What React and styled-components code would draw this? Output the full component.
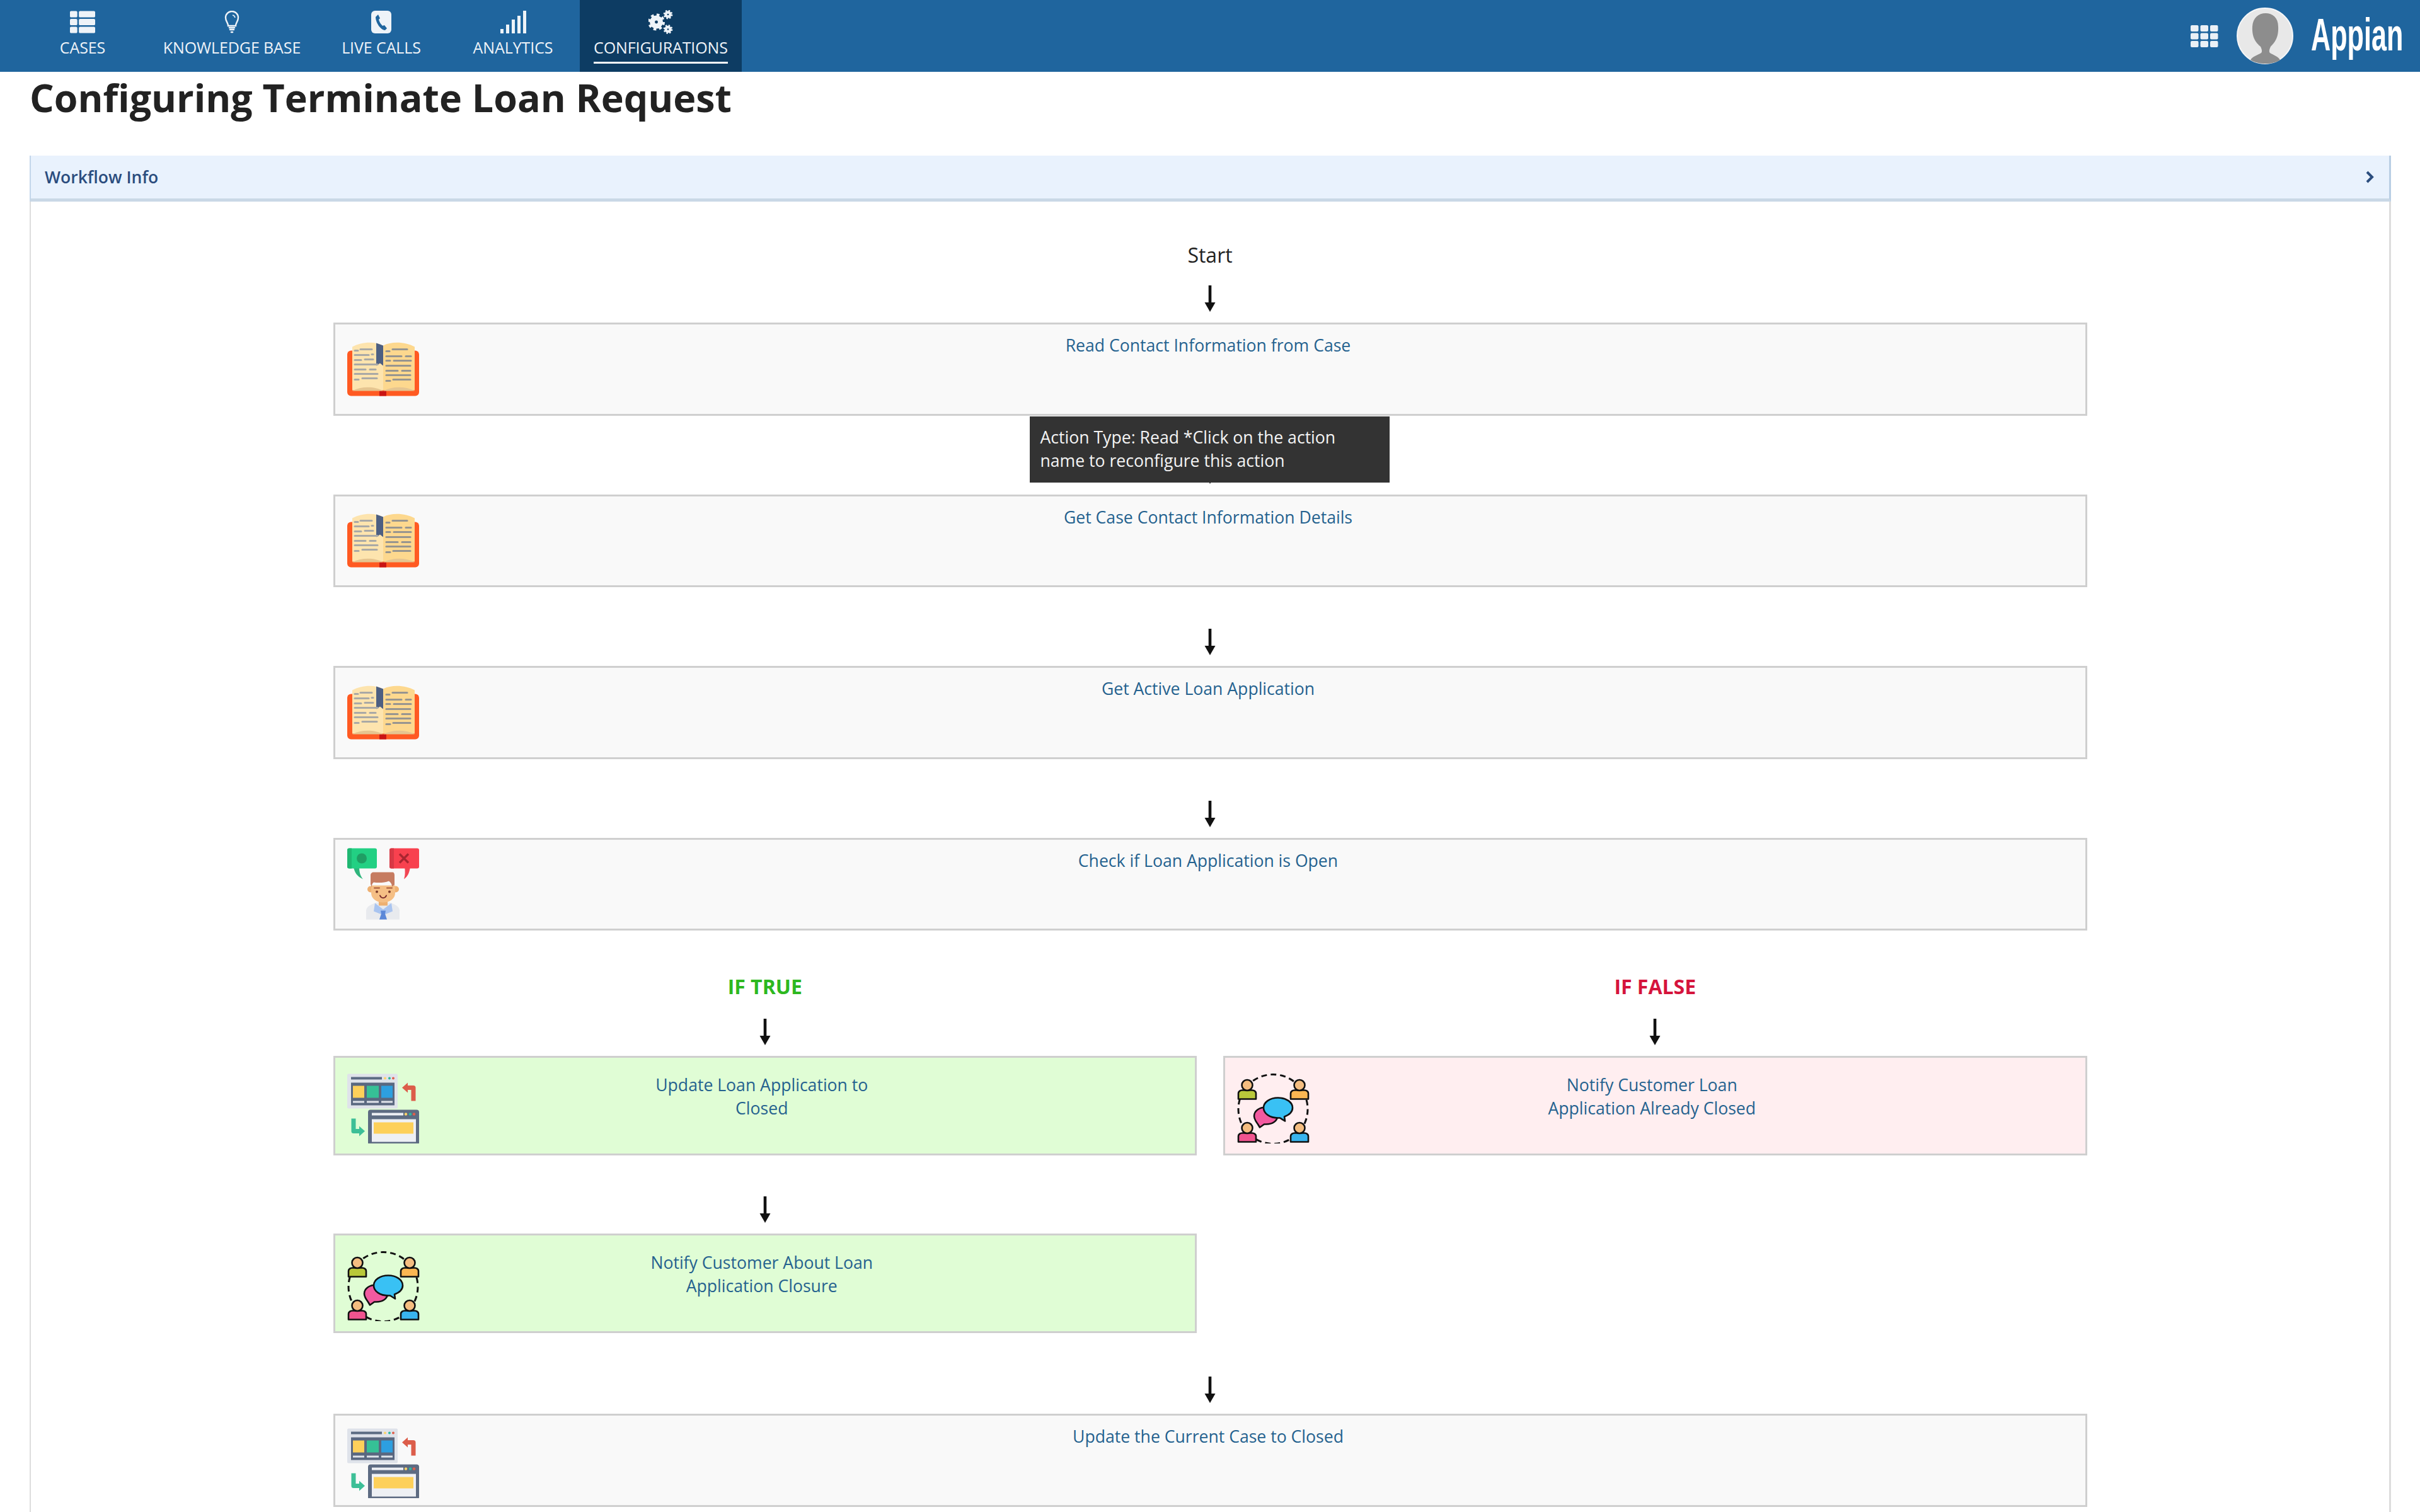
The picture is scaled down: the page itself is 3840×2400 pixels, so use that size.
import styled, { createGlobalStyle } from 'styled-components';
import { FaThList } from 'react-icons/fa';

const GlobalStyle = createGlobalStyle`
  html, body {
    margin: 0;
    padding: 0;
    background: #fff;
    font-family: "Open Sans", "Noto Sans", sans-serif;
  }
`;

const Page = styled.div`
  width: 3840px;
  height: 2400px;
  display: flex;
  flex-direction: column;
  overflow: hidden;
`;

const Header = styled.header`
  height: 114px;
  flex: none;
  background: #1f659e;
  display: flex;
  align-items: stretch;
  padding: 0 25px 0 28px;
`;

const Tabs = styled.nav`
  display: flex;
`;

const Tab = styled.a`
  width: ${props => props.$width}px;
  padding-top: 16px;
  box-sizing: border-box;
  display: flex;
  flex-direction: column;
  align-items: center;
  color: #eef3f8;
  background: ${props => (props.$active ? '#0d3c63' : 'transparent')};
`;

const TabIcon = styled.div`
  height: 38px;
  display: flex;
  align-items: center;
  justify-content: center;
  svg { display: block; }
`;

const TabLabel = styled.span`
  margin-top: 5px;
  font-size: 25px;
  line-height: 33px;
  padding-bottom: 6px;
  white-space: nowrap;
  letter-spacing: -0.1px;
  border-bottom: 3px solid ${props => (props.$active ? '#fff' : 'transparent')};
`;

const HeaderRight = styled.div`
  margin-left: auto;
  display: flex;
  align-items: center;
`;

const Avatar = styled.div`
  width: 90px;
  height: 90px;
  margin-left: 29px;
  svg { display: block; }
`;

const Logo = styled.span`
  display: inline-block;
  width: 148px;
  margin: -4px 0 0 28px;
  color: #fff;
  font-family: "Liberation Sans", sans-serif;
  font-size: 72px;
  font-weight: 700;
  line-height: 72px;
  white-space: nowrap;
  transform: scaleX(0.6);
  transform-origin: left center;
`;

const Title = styled.h1`
  margin: 0 0 51px;
  padding-left: 47px;
  font-size: 60.9px;
  line-height: 82px;
  font-weight: 700;
  color: #222;
`;

const Panel = styled.section`
  flex: 1;
  margin: 0 46px 0 47px;
  display: flex;
  flex-direction: column;
`;

const PanelHeader = styled.div`
  height: 68px;
  flex: none;
  display: flex;
  align-items: center;
  justify-content: space-between;
  padding: 0 24px 0 22px;
  background: #e9f2fd;
  border-left: 2px solid #c3d6ea;
  border-right: 3px solid #b9cee4;
  border-bottom: 5px solid #c9d8e6;
`;

const PanelTitle = styled.span`
  font-size: 26.5px;
  font-weight: 600;
  color: #2b4d7e;
`;

const PanelBody = styled.div`
  flex: 1;
  border-left: 2px solid #ddd;
  border-right: 3px solid #ddd;
`;

const Flow = styled.div`
  width: 2783px;
  margin: 0 auto;
  padding-top: 63px;
`;

const StartLabel = styled.div`
  text-align: center;
  font-size: 32px;
  line-height: 44px;
  color: #222;
`;

const Connector = styled.div`
  position: relative;
  padding: ${props => props.$top ?? 66}px 0 17px;
`;

const ArrowSvg = styled.svg`
  display: block;
  width: 20px;
  height: 42px;
  margin: 0 auto;
`;

const Tooltip = styled.div`
  position: absolute;
  top: 1px;
  left: 1105px;
  z-index: 2;
  width: 571px;
  height: 105px;
  box-sizing: border-box;
  padding: 15px 17px;
  background: #333;
  color: #f4f4f4;
  font-size: 26.6px;
  line-height: 37.5px;
`;

const tones = {
  neutral: '#f9f9f9',
  green: '#e0fdd5',
  red: '#ffeef0',
};

const Box = styled.div`
  display: flex;
  align-items: flex-start;
  box-sizing: border-box;
  height: ${props => (props.$half ? 158 : 147.5)}px;
  padding: ${props => (props.$half ? 25 : 15)}px ${props => (props.$half ? 144 : 140)}px 0 19px;
  background: ${props => tones[props.$tone || 'neutral']};
  border: 3px solid #cfcfcf;
`;

const BoxIcon = styled.svg`
  flex: none;
  width: 115px;
  height: 120px;
  align-self: center;
  margin-top: ${props => (props.$half ? -25 : -15)}px;
`;

const BoxText = styled.a`
  flex: 1;
  display: flex;
  justify-content: center;
  color: #25628f;
  font-size: 26.6px;
  line-height: 37px;
  text-align: center;
`;

const BoxLabel = styled.span`
  max-width: ${props => (props.$half ? '385px' : 'none')};
`;

const Branches = styled.div`
  display: grid;
  grid-template-columns: 1fr 1fr;
  column-gap: 42px;
  margin-top: 67px;
`;

const Branch = styled.div`
  display: flex;
  flex-direction: column;
`;

const BranchLabel = styled.div`
  text-align: center;
  font-size: 32px;
  line-height: 44px;
  font-weight: 700;
  color: ${props => props.$color};
`;

function Arrow() {
  return (
    <ArrowSvg viewBox="0 0 20 42">
      <path d="M7.7 0h4.6v30H7.7z" fill="#111" />
      <path d="M1.5 27h17L10 42z" fill="#111" />
    </ArrowSvg>
  );
}

function BulbIcon() {
  return (
    <svg width="26" height="36" viewBox="0 0 26 36" fill="none" stroke="#eef3f8" strokeWidth="2.4">
      <path d="M7 24c0-5-4-7-4-13a10 10 0 0 1 20 0c0 6-4 8-4 13z" />
      <path d="M9 27h8M10 30h6" strokeWidth="2.6" strokeLinecap="round" />
      <path d="M12 34h2" strokeWidth="2.6" strokeLinecap="round" />
      <path d="M14 7a5 5 0 0 1 4 4" strokeWidth="1.6" />
    </svg>
  );
}

function PhoneIcon() {
  return (
    <svg width="32" height="36" viewBox="0 0 32 36">
      <rect width="32" height="36" rx="6" fill="#eef3f8" />
      <path
        d="M11 6l3 6-2 2c1 4 3 7 6 10l3-1 4 5-3 3c-8-1-15-13-15-21z"
        fill="#1f659e"
      />
    </svg>
  );
}

function BarsIcon() {
  return (
    <svg width="41" height="36" viewBox="0 0 41 36" fill="#eef3f8">
      <rect x="0" y="29" width="5" height="7" />
      <rect x="9" y="22" width="5" height="14" />
      <rect x="18" y="14" width="5" height="22" />
      <rect x="27" y="8" width="5" height="28" />
      <rect x="36" y="0" width="5" height="36" />
    </svg>
  );
}

function Gear({ cx, cy, r }) {
  const dash = (2 * Math.PI * r * 1.2) / 16;
  return (
    <g fill="none" stroke="#eef3f8">
      <circle cx={cx} cy={cy} r={r * 0.68} strokeWidth={r * 0.84} />
      <circle cx={cx} cy={cy} r={r * 1.2} strokeWidth={r * 0.44} strokeDasharray={`${dash} ${dash}`} />
    </g>
  );
}

function GearsIcon() {
  return (
    <svg width="39" height="38" viewBox="0 0 39 38">
      <Gear cx={12.5} cy={19} r={9.5} />
      <Gear cx={31} cy={7} r={5.2} />
      <Gear cx={31} cy={30.5} r={5.2} />
    </svg>
  );
}

function GridIcon() {
  const cells = [];
  for (let r = 0; r < 3; r++) {
    for (let c = 0; c < 3; c++) {
      cells.push(<rect key={`${r}${c}`} x={c * 15.5} y={r * 12.5} width="12.5" height="10" rx="2" />);
    }
  }
  return (
    <svg width="44" height="35" viewBox="0 0 44 35" fill="#eaf0f6">
      {cells}
    </svg>
  );
}

function AvatarIcon() {
  return (
    <svg width="90" height="90" viewBox="0 0 90 90">
      <circle cx="45" cy="45" r="44" fill="#e8e8e8" stroke="#f4f6f8" strokeWidth="2" />
      <path
        d="M22 83c3-5 12-8 17-11 2-2 1-6-1-10-7-6-14-14-13-32 1-14 10-21 21-21s20 7 20 21c1 18-6 26-12 32-2 4-3 8-1 10 5 3 13 6 16 11-6 4-14 6-23 6s-18-2-24-6z"
        fill="#8d8d8d"
      />
    </svg>
  );
}

function BookIcon() {
  const left = [
    'M12 28h5M21 26h18', 'M12 35h22M39 34h2', 'M12 43h10M28 42h13', 'M12 50h36',
    'M12 58h17M36 58h9', 'M12 65h36', 'M12 74h6M24 72h23',
  ];
  const right = [
    'M62 29h5M72 26h23', 'M62 37h24M93 37h8', 'M62 44h6M74 44h27', 'M62 52h38',
    'M62 60h18M87 60h13', 'M62 67h38', 'M62 76h6M73 74h27',
  ];
  return (
    <>
      <rect x="0" y="28" width="114" height="72" rx="6" fill="#ff5a22" />
      <rect x="51" y="92" width="11" height="8" fill="#c91414" />
      <path d="M8 22c15-8 35-9 49-2v71H8z" fill="#fde4ae" />
      <path d="M107 22c-15-8-36-9-50-2v71h50z" fill="#fdd88e" />
      <path d="M8 92c16-8 36-7 49 0H8zM57 92c14-7 34-8 50 0H57z" fill="#e6c590" />
      <path d="M46 16l11 4v32l-5-4-6 4z" fill="#4d5f82" />
      <path d={left.join('')} stroke="#a9a9a6" strokeWidth="3.2" strokeLinecap="round" />
      <path d={right.join('')} stroke="#979590" strokeWidth="3.2" strokeLinecap="round" />
    </>
  );
}

function DecisionIcon() {
  return (
    <>
      <path d="M10 30c1 9 6 16 15 20-5-6-6-13-6-20z" fill="#2fb57c" />
      <rect x="0" y="1" width="47" height="32" rx="3" fill="#22d083" />
      <path d="M3 1h4v32H3a3 3 0 0 1-3-3V4a3 3 0 0 1 3-3z" fill="#1fb772" />
      <circle cx="23" cy="17" r="8" fill="#1f9e64" />
      <path d="M100 30c-1 9-4 16-10 20 2-6 2-13 1-20z" fill="#f24654" />
      <rect x="67" y="1" width="47" height="32" rx="3" fill="#f8414f" />
      <path d="M70 1h4v32h-4a3 3 0 0 1-3-3V4a3 3 0 0 1 3-3z" fill="#d83845" />
      <path d="M83 10l14 14M97 10L83 24" stroke="#a92530" strokeWidth="3.5" />
      <path d="M30 114v-14c0-7 10-11 17-13h20c7 2 16 6 16 13v14z" fill="#e8eaee" />
      <path d="M44 88l13 10 13-10 2 13-15 6-15-6z" fill="#a9c4f0" />
      <path d="M53 100h8l-1 5 3 9H51l3-9z" fill="#5b87d8" />
      <rect x="50" y="76" width="14" height="16" fill="#eeb071" />
      <circle cx="37" cy="66" r="5" fill="#eeb071" />
      <circle cx="77" cy="66" r="5" fill="#eeb071" />
      <path d="M38 60h38v12c0 9-9 15-19 15s-19-6-19-15z" fill="#f5bf85" />
      <path d="M37 58V44c0-3 2-5 5-5h30c2 0 3 2 3 5v15l-4 3c0-4-2-7-5-9-7 3-17 3-24 2-3 2-3 5-3 8z" fill="#c67c61" />
      <path d="M43 64h8M63 64h8" stroke="#a5573b" strokeWidth="2" strokeLinecap="round" />
      <circle cx="47" cy="70" r="2" fill="#7a3b2b" />
      <circle cx="67" cy="70" r="2" fill="#7a3b2b" />
      <path d="M52 76c2 5 8 5 10 0" fill="none" stroke="#7a2b2b" strokeWidth="2" strokeLinecap="round" />
    </>
  );
}

function ScreensIcon() {
  return (
    <>
      <rect x="0" y="7" width="80" height="55" rx="2" fill="#dfe3ea" />
      <rect x="6" y="12" width="49" height="4" fill="#5b6b82" />
      <circle cx="60" cy="14" r="2" fill="#fbd36a" />
      <circle cx="67" cy="14" r="2" fill="#2fb9a0" />
      <circle cx="73" cy="14" r="2" fill="#e0604c" />
      <rect x="6" y="21" width="69" height="36" fill="#5a6880" />
      <rect x="9" y="26" width="18" height="19" fill="#fdd05a" />
      <rect x="31" y="26" width="19" height="19" fill="#36c096" />
      <rect x="54" y="26" width="18" height="19" fill="#2d9fe0" />
      <path d="M9 50h18v3H9zM31 50h19v3H31zM54 50h18v3H54z" fill="#dfe3ea" />
      <rect x="33" y="64" width="81" height="56" rx="4" fill="#5d6b82" />
      <rect x="39" y="69" width="50" height="4" fill="#eef0f4" />
      <circle cx="93" cy="71" r="2.2" fill="#fbd36a" />
      <circle cx="100" cy="71" r="2.2" fill="#2fb9a0" />
      <circle cx="106" cy="71" r="2.2" fill="#e0604c" />
      <rect x="39" y="79" width="70" height="36" fill="#eef0f4" />
      <rect x="42" y="84" width="63" height="18" fill="#fdd05a" />
      <path d="M105 50V29H94" fill="none" stroke="#dc5d4a" strokeWidth="7" strokeLinejoin="round" />
      <path d="M87 29l9-8v16z" fill="#dc5d4a" />
      <path d="M10 78v20h14" fill="none" stroke="#3dbf97" strokeWidth="7" strokeLinejoin="round" />
      <path d="M28 98l-9-8v16z" fill="#3dbf97" />
    </>
  );
}

function ChatPerson({ x, y, color }) {
  return (
    <g stroke="#111" strokeWidth="2.6">
      <path d={`M${x - 14} ${y + 17}v-9c0-3 3-5 6-5h16c3 0 6 2 6 5v9z`} fill={color} strokeLinejoin="round" />
      <circle cx={x} cy={y - 5} r="8.5" fill="#f4bd80" />
    </g>
  );
}

function ChatIcon() {
  return (
    <>
      <circle cx="57" cy="63" r="55" fill="none" stroke="#111" strokeWidth="3" strokeDasharray="9 6" />
      <ChatPerson x={16} y={30} color="#b9c83a" />
      <ChatPerson x={99} y={30} color="#fbb752" />
      <ChatPerson x={16} y={98} color="#f0548f" />
      <ChatPerson x={99} y={98} color="#39b4ee" />
      <path
        d="M33 87c-3-4-6-8-6-13 0-8 8-14 19-14 10 0 18 6 18 14s-8 13-18 13h-3l-7 5z"
        fill="#f25aa0"
        stroke="#111"
        strokeWidth="2.6"
        strokeLinejoin="round"
      />
      <path
        d="M65 45c-13 0-23 7-23 16s10 16 23 16h3l8 5-1-7c8-3 13-8 13-14 0-9-10-16-23-16z"
        fill="#39c1f4"
        stroke="#111"
        strokeWidth="2.6"
        strokeLinejoin="round"
      />
    </>
  );
}

const navItems = [
  { label: 'CASES', width: 206, icon: <FaThList size={40} /> },
  { label: 'KNOWLEDGE BASE', width: 268, icon: <BulbIcon /> },
  { label: 'LIVE CALLS', width: 206, icon: <PhoneIcon /> },
  { label: 'ANALYTICS', width: 212, icon: <BarsIcon /> },
  { label: 'CONFIGURATIONS', width: 257, icon: <GearsIcon />, active: true },
];

function Step({ label, icon, tone, half }) {
  return (
    <Box $tone={tone} $half={half}>
      <BoxIcon viewBox="0 -2.5 115 120" $half={half}>
        {icon}
      </BoxIcon>
      <BoxText>
        <BoxLabel $half={half}>{label}</BoxLabel>
      </BoxText>
    </Box>
  );
}

export default function App() {
  return (
    <Page>
      <GlobalStyle />
      <Header>
        <Tabs>
          {navItems.map(item => (
            <Tab key={item.label} $width={item.width} $active={item.active}>
              <TabIcon>{item.icon}</TabIcon>
              <TabLabel $active={item.active}>{item.label}</TabLabel>
            </Tab>
          ))}
        </Tabs>
        <HeaderRight>
          <GridIcon />
          <Avatar>
            <AvatarIcon />
          </Avatar>
          <Logo>Appian</Logo>
        </HeaderRight>
      </Header>

      <Title>Configuring Terminate Loan Request</Title>

      <Panel>
        <PanelHeader>
          <PanelTitle>Workflow Info</PanelTitle>
          <svg width="14" height="20" viewBox="0 0 14 20" fill="none" stroke="#2b4d7e" strokeWidth="4">
            <path d="M3 2l8 8-8 8" />
          </svg>
        </PanelHeader>
        <PanelBody>
          <Flow>
            <StartLabel>Start</StartLabel>
            <Connector $top={26}>
              <Arrow />
            </Connector>
            <Step label="Read Contact Information from Case" icon={<BookIcon />} />
            <Connector>
              <Tooltip>Action Type: Read *Click on the action name to reconfigure this action</Tooltip>
              <Arrow />
            </Connector>
            <Step label="Get Case Contact Information Details" icon={<BookIcon />} />
            <Connector>
              <Arrow />
            </Connector>
            <Step label="Get Active Loan Application" icon={<BookIcon />} />
            <Connector>
              <Arrow />
            </Connector>
            <Step label="Check if Loan Application is Open" icon={<DecisionIcon />} />

            <Branches>
              <Branch>
                <BranchLabel $color="#2db81f">IF TRUE</BranchLabel>
                <Connector $top={29}>
                  <Arrow />
                </Connector>
                <Step half tone="green" label="Update Loan Application to Closed" icon={<ScreensIcon />} />
                <Connector $top={65}>
                  <Arrow />
                </Connector>
                <Step half tone="green" label="Notify Customer About Loan Application Closure" icon={<ChatIcon />} />
              </Branch>
              <Branch>
                <BranchLabel $color="#d5143c">IF FALSE</BranchLabel>
                <Connector $top={29}>
                  <Arrow />
                </Connector>
                <Step half tone="red" label="Notify Customer Loan Application Already Closed" icon={<ChatIcon />} />
              </Branch>
            </Branches>

            <Connector $top={69}>
              <Arrow />
            </Connector>
            <Step label="Update the Current Case to Closed" icon={<ScreensIcon />} />
          </Flow>
        </PanelBody>
      </Panel>
    </Page>
  );
}
